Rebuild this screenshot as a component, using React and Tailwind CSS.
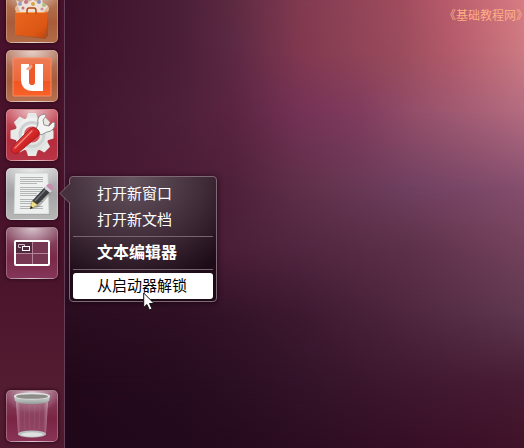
import React from "react";

const FONT = "font-['Noto_Sans','Noto_Sans_CJK_SC',sans-serif]";

function SoftwareCenterIcon() {
  return (
    <svg viewBox="0 0 52 52" className="size-full" aria-hidden="true">
      <defs>
        <linearGradient id="bag" x1="0" y1="0" x2="1" y2="1">
          <stop offset="0" stopColor="#e8661f" />
          <stop offset="0.7" stopColor="#dd5714" />
          <stop offset="1" stopColor="#b84310" />
        </linearGradient>
      </defs>
      <ellipse cx="26" cy="18" rx="17" ry="8" fill="#ffe9c4" opacity="0.6" />
      <g opacity="0.9">
        <path d="M10 9l5 3 4-4 3 5 5-5 4 4 5-4 1 6 5 1-5 6H14z" fill="#efe5df" />
        <circle cx="14" cy="13" r="2" fill="#8d9fc4" />
        <circle cx="20" cy="11" r="2" fill="#c16b82" />
        <circle cx="27" cy="13" r="2" fill="#d6a03f" />
        <circle cx="33" cy="11" r="2" fill="#8491b8" />
        <circle cx="38" cy="14" r="2" fill="#a6bd80" />
        <circle cx="17" cy="17" r="1.5" fill="#c16b82" />
        <circle cx="36" cy="18" r="1.5" fill="#cc8695" />
      </g>
      <path d="M10 44l29 4 3-3-1-25z" fill="#7d3413" opacity="0.4" />
      <path d="M9 21h33l-2 26-31-3z" fill="url(#bag)" />
      <path d="M9 21h33l-5 1H10z" fill="#ff9b50" />
      <path d="M21 23v-3q0-3 2-3h5q2 0 2 3v3" fill="none" stroke="#b9480d" strokeWidth="1.5" />
    </svg>
  );
}

function UbuntuOneIcon() {
  return (
    <svg viewBox="0 0 52 52" className="size-full" aria-hidden="true">
      <defs>
        <linearGradient id="one" x1="0" y1="0" x2="0" y2="1">
          <stop offset="0" stopColor="#ee7c55" />
          <stop offset="0.6" stopColor="#ec6738" />
          <stop offset="0.62" stopColor="#f05522" />
          <stop offset="1" stopColor="#f9622b" />
        </linearGradient>
      </defs>
      <rect x="7" y="8" width="38" height="38" rx="1" fill="url(#one)" stroke="#fa8c62" />
      <path d="M15 14h8v17q0 4 3 4t3-4V14h8v27H27q-12 0-12-12z" fill="#fff" />
      <path d="M23 18l4-4h2v17q0 4-3 4t-3-4z" fill="#ee5927" />
      <path d="M20 19l2-2 3-2 2 1-3 4h-3z" fill="#eda791" />
    </svg>
  );
}

function SettingsIcon() {
  const teeth = [0, 45, 90, 135, 180, 225, 270, 315];
  return (
    <svg viewBox="0 0 52 52" className="size-full" aria-hidden="true">
      <defs>
        <linearGradient id="gear" x1="0" y1="0" x2="0" y2="1">
          <stop offset="0" stopColor="#f2f2f1" />
          <stop offset="1" stopColor="#dde0de" />
        </linearGradient>
        <linearGradient id="handle" x1="0" y1="0" x2="1" y2="1">
          <stop offset="0.2" stopColor="#e8443f" />
          <stop offset="0.6" stopColor="#cc2023" />
          <stop offset="1" stopColor="#8d1015" />
        </linearGradient>
      </defs>
      <g transform="translate(26 25.500)" fill="#e7e9e7">
        {teeth.map((a) => (
          <path key={a} d="M-6-15l2-6.500h8l2 6.500z" transform={`rotate(${a})`} />
        ))}
        <circle r="17" fill="url(#gear)" />
      </g>
      <circle cx="26" cy="25.500" r="12" fill="none" stroke="#cdd2d0" strokeWidth="3" />
      <circle cx="26" cy="25.500" r="8" fill="#d9525b" />
      <path d="M30 20l2-5q-2-9 7-10l1 2-3 4 1 5 5 1 4-4 2 1q0 8-8 9l-6 3z" fill="#f4f4f2" stroke="#858987" strokeWidth="0.9" />
      <path d="M24 20q3-3 7 0t1 7L12 44q-4 2-6-1t1-6z" fill="url(#handle)" stroke="#9f191d" strokeWidth="0.8" />
      <path d="M26 22L9 39" stroke="#f58b81" strokeWidth="1.2" strokeLinecap="round" />
    </svg>
  );
}

function TextEditorIcon() {
  const lines = [9, 11, 13, 15, 19, 21, 23, 25, 27, 31, 33, 35, 38, 40];
  return (
    <svg viewBox="0 0 52 52" className="size-full" aria-hidden="true">
      <path d="M8 47h36l-1-3H9z" fill="#777" opacity="0.5" />
      <path d="M9 5h33l1 41H8z" fill="#eef0ef" stroke="#c7cbca" strokeWidth="0.7" />
      {lines.map((y, i) => (
        <path key={y} d={`M14 ${y}.500h${i % 4 === 3 ? 17 : 23}`} stroke="#a3a7a6" strokeWidth="0.8" />
      ))}
      <path d="M25 41l8-2 13-15-3-2z" fill="#777" opacity="0.5" />
      <path d="M26 33l13-14 6 4-14 14z" fill="#3a3c40" />
      <path d="M29 33l12-13" stroke="#73767a" strokeWidth="1.4" />
      <path d="M38 20l2-2 6 5-2 2z" fill="#d7d7df" />
      <path d="M40 18l2-2q3-1 5 2 1 2-1 5z" fill="#c68fb0" />
      <path d="M26 33l6 4-8 4z" fill="#efdf8a" stroke="#917b34" strokeWidth="0.5" />
      <path d="M24 41l1-3 2 2z" fill="#171717" />
    </svg>
  );
}

function WorkspaceIcon() {
  return (
    <svg viewBox="0 0 52 52" className="size-full" aria-hidden="true">
      <rect x="9" y="14" width="34" height="24" fill="#773752" />
      <rect x="9" y="14" width="17" height="12" fill="#512a3e" />
      <path d="M26.500 15v22M10 26.500h33" stroke="#b5839a" />
      <rect x="9" y="14" width="34" height="24" rx="1" fill="none" stroke="#fff" strokeWidth="2" />
      <path d="M15 20.500h-2.500v-3h6v2" fill="none" stroke="#cfb9c5" />
      <rect x="16.500" y="19.500" width="7" height="4" fill="#512a3e" stroke="#fff" />
    </svg>
  );
}

function TrashIcon() {
  return (
    <svg viewBox="0 0 52 52" className="size-full" aria-hidden="true">
      <defs>
        <linearGradient id="glass" x1="0" y1="0" x2="1" y2="0">
          <stop offset="0" stopColor="#e1bfd0" stopOpacity="0.6" />
          <stop offset="0.15" stopColor="#a86a83" stopOpacity="0.4" />
          <stop offset="0.85" stopColor="#a86a83" stopOpacity="0.4" />
          <stop offset="1" stopColor="#e5c8d5" stopOpacity="0.6" />
        </linearGradient>
        <linearGradient id="rim" x1="0" y1="0" x2="0" y2="1">
          <stop offset="0" stopColor="#d8dcda" />
          <stop offset="1" stopColor="#949d99" />
        </linearGradient>
      </defs>
      <path d="M10 12l2 32q14 5 28 0l2-32z" fill="url(#glass)" />
      <path d="M18 15l1 26M23 15l1 26M29 15l-1 26M34 15l-1 26" stroke="#bc94a7" strokeWidth="0.5" opacity="0.3" />
      <ellipse cx="26" cy="44" rx="14" ry="3.500" fill="#b9bfbd" />
      <ellipse cx="26" cy="44.500" rx="11" ry="2.200" fill="#dfe2e1" />
      <path d="M8 6l1 5q3 3 17 3t17-3l1-5z" fill="url(#rim)" />
      <ellipse cx="26" cy="6" rx="18" ry="3.500" fill="#e2e5e4" />
      <ellipse cx="26" cy="6.500" rx="16" ry="2.300" fill="#8d8b88" />
    </svg>
  );
}

const apps = [
  { name: "Ubuntu 软件中心", Icon: SoftwareCenterIcon, tone: "bg-[linear-gradient(#b88061,#a95b38_60%,#b16c48)]" },
  { name: "Ubuntu One", Icon: UbuntuOneIcon, tone: "bg-[linear-gradient(#b9806b,#a65b3a_60%,#b87352)]" },
  { name: "系统设置", Icon: SettingsIcon, tone: "bg-[linear-gradient(#c95663,#b52b3c_60%,#b93547)]" },
  { name: "文本编辑器", Icon: TextEditorIcon, tone: "bg-[linear-gradient(#c3c1c4,#a5a3a6_50%,#b8b8b8)]" },
  { name: "工作区切换器", Icon: WorkspaceIcon, tone: "bg-[linear-gradient(#8b536a,#7b2948_60%,#84375a)]" },
];

function Tile({ name, Icon, tone }) {
  return (
    <button
      type="button"
      aria-label={name}
      className={`relative block size-[52px] shrink-0 overflow-hidden rounded-[5px] shadow-[0_0_3px_1px_#240814aa] ${tone}`}
    >
      <span className="absolute inset-0 rounded-[5px] border border-white/25 bg-[radial-gradient(ellipse_60%_45%_at_50%_0%,rgba(255,255,255,.65),transparent)]" />
      <span className="relative block size-full">
        <Icon />
      </span>
    </button>
  );
}

function Launcher() {
  return (
    <nav
      aria-label="启动器"
      className="flex w-[65px] shrink-0 flex-col justify-between border-r border-[#65405a] bg-[linear-gradient(#48122c,#49132b_60%,#541c30_85%,#501a2e)] pb-1.5 pl-1.5"
    >
      <div className="-mt-[9px] flex flex-col gap-[7px]">
        {apps.map((app) => (
          <Tile key={app.name} {...app} />
        ))}
      </div>
      <Tile name="回收站" Icon={TrashIcon} tone="bg-[linear-gradient(#8c4964,#782442_55%,#8b3458)]" />
    </nav>
  );
}

function MenuItem({ children, className = "text-[15px] text-white" }) {
  return (
    <button type="button" role="menuitem" className={`block h-[26px] w-full rounded-[3px] pb-0.5 pl-6 text-left leading-6 ${className}`}>
      {children}
    </button>
  );
}

function QuickList() {
  return (
    <div
      role="menu"
      aria-label="文本编辑器"
      className="absolute top-[176px] left-[69px] w-[148px] rounded-[4px] border border-[#806975] bg-[radial-gradient(ellipse_85%_90%_at_42%_0%,#65555f,#3f2b38_60%,#1d0b17)] px-[3px] pt-1 pb-0.5 shadow-[0_1px_5px_1px_#16051299]"
    >
      <svg viewBox="0 0 12 22" className="absolute top-[6px] -left-[11px] h-[22px] w-3" aria-hidden="true">
        <path d="M12 0L1 10.500 12 21z" fill="#44313d" />
        <path d="M11 .5L1 10.500 11 20.500" fill="none" stroke="#806975" />
      </svg>
      <MenuItem>打开新窗口</MenuItem>
      <MenuItem>打开新文档</MenuItem>
      <hr className="my-[3px] border-[#79636f]" />
      <MenuItem className="text-base font-bold text-white">文本编辑器</MenuItem>
      <hr className="my-[3px] border-[#79636f]" />
      <MenuItem className="bg-white text-[15px] text-black">从启动器解锁</MenuItem>
    </div>
  );
}

function Pointer() {
  return (
    <svg viewBox="0 0 12 19" className="absolute top-[292px] left-[143px] h-[19px] w-3" aria-hidden="true">
      <path d="M.7 1v14.500l3.200-3 2.500 5.500 2.600-1.200-2.500-5.300h4.600z" fill="#fff" stroke="#111" />
    </svg>
  );
}

// Horizontal colour bands, each fading in over the one above it.
const bands = [
  "bg-[linear-gradient(90deg,#3a1129,#4b1f38_25%,#5c2a40_36%,#803a50_51%,#a04c5e_73%,#b95c6c_84%,#d87c84)]",
  "bg-[linear-gradient(90deg,#3c122b,#4c1e38_25%,#5b2844_36%,#80384f_51%,#9a4c5c_73%,#b25a6a_84%,#cc7a82)] [mask-image:linear-gradient(transparent,black_12%)]",
  "bg-[linear-gradient(90deg,#40142d,#4e2039_25%,#5a2440_36%,#743256_51%,#803c5e_64%,#95506a_77%,#b46c80)] [mask-image:linear-gradient(transparent_12%,black_25%)]",
  "bg-[linear-gradient(90deg,#44152f,#4c1c35_25%,#4e2039_36%,#5f2f48_51%,#704060_75%,#854e6e)] [mask-image:linear-gradient(transparent_25%,black_42%)]",
  "bg-[linear-gradient(90deg,#3e132c,#451831_25%,#4c1f38_36%,#522640_51%,#5e3149_75%,#75425c)] [mask-image:linear-gradient(transparent_42%,black_55%)]",
  "bg-[linear-gradient(90deg,#2a0d20,#2f1023_25%,#341329_36%,#3d1930_51%,#4f273f_75%,#5f3850)] [mask-image:linear-gradient(transparent_55%,black_70%)]",
  "bg-[linear-gradient(90deg,#220819,#260c1e_25%,#2b0f22_36%,#331329_51%,#401930_75%,#481d35)] [mask-image:linear-gradient(transparent_70%,black_85%)]",
  "bg-[linear-gradient(90deg,#20081a,#22091b_25%,#250a1c_36%,#2b0d20_51%,#360e25_75%,#401228)] [mask-image:linear-gradient(transparent_85%,black)]",
];

export default function App() {
  return (
    <div className={`relative flex min-h-screen w-full overflow-hidden bg-[#2b0c20] ${FONT}`}>
      <Launcher />
      <main className="grid flex-1">
        {bands.map((band) => (
          <div key={band} className={`[grid-area:1/1] ${band}`} />
        ))}
        <p className="z-10 pt-2 pr-0.5 text-right text-xs leading-4 whitespace-nowrap text-[#ffad82] [font-feature-settings:'halt'] [grid-area:1/1]">
          《基础教程网》
        </p>
      </main>
      <QuickList />
      <Pointer />
    </div>
  );
}
